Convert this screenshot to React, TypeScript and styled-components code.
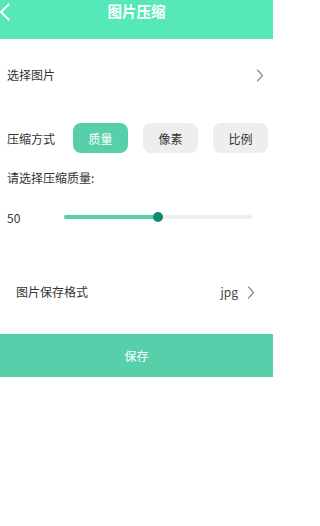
import React, { useState } from "react";
import styled, { createGlobalStyle } from "styled-components";

const Global = createGlobalStyle`
  html, body { margin: 0; padding: 0; background: #ffffff; }
  body { font-family: "Noto Sans CJK SC", "Noto Sans", sans-serif; color: #333333; }
  * { box-sizing: border-box; }
`;

const Page = styled.div`
  width: 273px;
  min-height: 526px;
  background: #ffffff;
  display: flex;
  flex-direction: column;
`;

const Header = styled.header`
  height: 39px;
  background: #56e8b9;
  display: grid;
  grid-template-columns: 40px 1fr 40px;
  align-items: start;
  padding-top: 1px;
`;

const BackButton = styled.div`
  display: flex;
  align-items: flex-start;
  padding-top: 2px;
`;

const Title = styled.h1`
  margin: 0;
  text-align: center;
  font-size: 14.5px;
  line-height: 20px;
  font-weight: 700;
  color: #ffffff;
`;

const Row = styled.div<{ $top: number; $left?: number; $right?: number }>`
  margin-top: ${(p) => p.$top}px;
  padding: 0 ${(p) => p.$right ?? 8}px 0 ${(p) => p.$left ?? 7}px;
  display: flex;
  align-items: center;
  min-height: 18px;
`;

const Label = styled.span`
  font-size: 12px;
  line-height: 18px;
  color: #333333;
  flex: 1;
`;

const Value = styled.span`
  font-size: 12px;
  line-height: 18px;
  color: #444444;
  margin-right: 9px;
`;

const ModeRow = styled.div`
  margin-top: 39px;
  padding-left: 7px;
  display: flex;
  align-items: center;
  height: 30px;
`;

const ModeLabel = styled.span`
  font-size: 12px;
  color: #333333;
  width: 66px;
`;

const Modes = styled.div`
  display: flex;
  gap: 15px;
`;

const ModeButton = styled.button<{ $active: boolean }>`
  width: 55px;
  height: 30px;
  border: none;
  border-radius: 8px;
  font-family: inherit;
  font-size: 12px;
  padding: 0;
  background: ${(p) => (p.$active ? "#56cfaa" : "#eeeeee")};
  color: ${(p) => (p.$active ? "#ffffff" : "#333333")};
`;

const Hint = styled.div`
  margin-top: 16px;
  padding-left: 7px;
  font-size: 12px;
  line-height: 18px;
  color: #333333;
`;

const SliderRow = styled.div`
  margin-top: 21px;
  padding-left: 7px;
  display: flex;
  align-items: center;
  height: 18px;
`;

const SliderValue = styled.span`
  width: 57px;
  font-size: 12px;
  color: #333333;
`;

const Track = styled.div`
  position: relative;
  width: 188px;
  height: 4px;
  border-radius: 2px;
  background: #eeeeee;
`;

const Fill = styled.div`
  position: absolute;
  left: 0;
  top: 0;
  bottom: 0;
  border-radius: 2px;
  background: #56cfaa;
`;

const Thumb = styled.div`
  position: absolute;
  top: 50%;
  width: 10px;
  height: 10px;
  margin-left: -5px;
  margin-top: -5px;
  border-radius: 50%;
  background: #0e8a6e;
`;

const SaveButton = styled.button`
  margin-top: 33px;
  width: 100%;
  height: 43px;
  border: none;
  background: #56cfaa;
  color: #ffffff;
  font-family: inherit;
  font-size: 12px;
  padding: 0;
`;

const Chevron = ({ color = "#8a8a8a" }: { color?: string }) => (
  <svg width="8" height="13" viewBox="0 0 8 13">
    <polyline points="1.5,1 6.5,6.5 1.5,12" fill="none" stroke={color} strokeWidth="1.2" strokeLinecap="round" strokeLinejoin="round" />
  </svg>
);

export default function App() {
  const [mode, setMode] = useState(0);
  const value = 50;
  const pct = 0.5;
  return (
    <>
      <Global />
      <Page>
        <Header>
          <BackButton>
            <svg width="10" height="18" viewBox="0 0 10 18">
              <polyline points="8.5,1.5 1,9 8.5,16.5" fill="none" stroke="#ffffff" strokeWidth="2" strokeLinecap="round" strokeLinejoin="round" />
            </svg>
          </BackButton>
          <Title>图片压缩</Title>
          <div />
        </Header>

        <Row $top={27} $right={9}>
          <Label>选择图片</Label>
          <Chevron />
        </Row>

        <ModeRow>
          <ModeLabel>压缩方式</ModeLabel>
          <Modes>
            {["质量", "像素", "比例"].map((m, i) => (
              <ModeButton key={m} $active={mode === i} onClick={() => setMode(i)}>
                {m}
              </ModeButton>
            ))}
          </Modes>
        </ModeRow>

        <Hint>请选择压缩质量:</Hint>

        <SliderRow>
          <SliderValue>{value}</SliderValue>
          <Track>
            <Fill style={{ width: `${pct * 100}%` }} />
            <Thumb style={{ left: `${pct * 100}%` }} />
          </Track>
        </SliderRow>

        <Row $top={57} $left={16} $right={18}>
          <Label>图片保存格式</Label>
          <Value>jpg</Value>
          <Chevron />
        </Row>

        <SaveButton>保存</SaveButton>
      </Page>
    </>
  );
}
